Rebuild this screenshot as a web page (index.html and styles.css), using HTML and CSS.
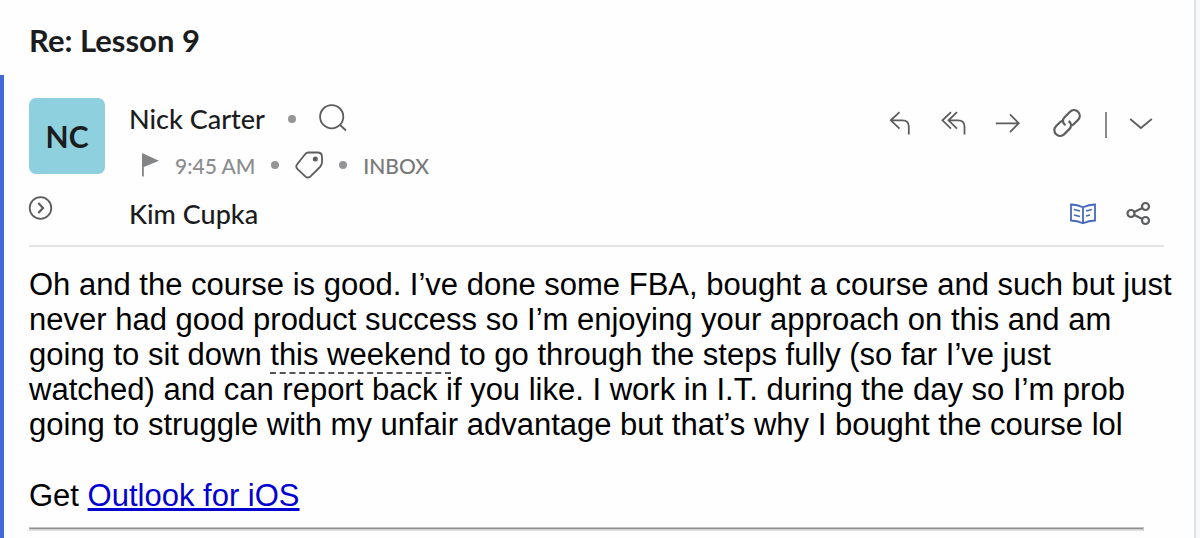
FILE: index.html
```html
<!DOCTYPE html>
<html lang="en">
<head>
<meta charset="utf-8">
<title>Re: Lesson 9</title>
<link rel="stylesheet" href="styles.css">
</head>
<body>
<main class="pane">
  <h1 class="subject">Re: Lesson 9</h1>
  <article class="message">
    <header class="head">
      <div class="avatar">NC</div>
      <div class="row from">
        <span class="person">Nick Carter</span>
        <span class="dot"></span>
        <button class="icon" type="button" aria-label="Search sender"><svg viewBox="0 0 28 28"><circle cx="12.700" cy="11.700" r="11.600"/><path d="M21 20l6 5.500"/></svg></button>
      </div>
      <div class="actions">
        <button class="icon" type="button" aria-label="Reply"><svg viewBox="0 0 28 28"><path d="M13.500 3.200L4.800 11.300L13.500 19.600M5 11.300H16.500Q22.800 11.300 22.800 17.500V25.500"/></svg></button>
        <button class="icon" type="button" aria-label="Reply all"><svg viewBox="0 0 28 28"><path d="M11 3.200L2.500 11.300L11 19.600M17 3.200L8.500 11.300L17 19.600M9 11.300H18Q24.500 11.300 24.500 17.500V25.500"/></svg></button>
        <button class="icon" type="button" aria-label="Forward"><svg viewBox="0 0 28 28"><path d="M1.800 14.300H24.500M16 5.300L24.700 14.300L16 23.200"/></svg></button>
        <button class="icon link" type="button" aria-label="Copy link"><svg viewBox="0 0 28 28"><g class="bold"><path d="M12.500 16.200C9 13.800 9.400 10.400 11.800 8L16.800 3C19.200.6 22.500.4 25 2.800C27.500 5.300 27.300 8.600 24.900 11L20.600 15.200Q19.300 16.400 17.600 16.700M15.600 12C19 14.300 18.700 17.700 16.300 20.100L11.300 25.100C8.900 27.500 5.600 27.700 3.100 25.200C.6 22.700.8 19.400 3.200 17L7 13.300Q8.400 12 10.200 11.600"/></g></svg></button>
        <span class="rule"></span>
        <button class="icon" type="button" aria-label="More actions"><svg viewBox="0 0 28 28"><path d="M3.200 10L13.900 19L24.800 10"/></svg></button>
      </div>
      <div class="row meta">
        <svg class="flag" viewBox="0 0 18 24"><path d="M1 0L18 7.700L2.800 14V23.500H1Z"/></svg>
        <time>9:45 AM</time>
        <span class="dot"></span>
        <button class="icon" type="button" aria-label="Tag"><svg viewBox="0 0 28 28"><path d="M13.500 1.500H22.500Q27 1.500 27 6V11Q27 14 25 16L15.500 25.300Q12.800 27.800 10.200 25.300L2.600 18.200Q0 15.500 2.500 12.800L10 3.300Q11.500 1.500 13.500 1.500Z"/><circle cx="20.300" cy="8" r="1.600" fill="currentColor"/></svg></button>
        <span class="dot"></span>
        <span class="folder">INBOX</span>
      </div>
      <button class="icon expand" type="button" aria-label="Show recipients"><svg viewBox="0 0 24 24"><circle cx="11.500" cy="12" r="10.800"/><path class="bold" d="M9.300 7L14 12L9.300 17"/></svg></button>
      <div class="row to"><span class="person">Kim Cupka</span></div>
      <div class="tools">
        <button class="icon reader" type="button" aria-label="Reading view"><svg viewBox="0 0 28 28"><path d="M14 7.300Q8 4.400 2 4.500V20.500Q8 20.500 14 23.300Q20 20.500 26 20.500V4.500Q20 4.400 14 7.300V23.300M5 9.500L11 11M5 15L11 16.500M17 11L22.800 9.500M17 16L21 15"/></svg></button>
        <button class="icon" type="button" aria-label="Share"><svg viewBox="0 0 28 28"><g class="bold"><circle cx="6" cy="13.500" r="3.500"/><circle cx="20.500" cy="6.500" r="3.500"/><circle cx="20.500" cy="20.500" r="3.500"/><path d="M9.200 12L17.400 8M9.200 15L17.400 19"/></g></svg></button>
      </div>
    </header>
    <div class="body">
      <p>Oh and the course is good. I’ve done some FBA, bought a course and such but just never had good product success so I’m enjoying your approach on this and am going to sit down <span class="date">this weekend</span> to go through the steps fully (so far I’ve just watched) and can report back if you like. I work in I.T. during the day so I’m prob going to struggle with my unfair advantage but that’s why I bought the course lol</p>
      <p>Get <a href="#">Outlook for iOS</a></p>
      <hr>
    </div>
  </article>
</main>
</body>
</html>
```
FILE: styles.css
```css
* { box-sizing: border-box; }

body {
  margin: 0;
  background: #f7f8fa;
  color: #1b1c1d;
  font-family: Lato, sans-serif;
  overflow: hidden;
}

.pane {
  display: flex;
  flex-direction: column;
  min-height: 100vh;
  margin-right: 4px;
  background: #fefefe;
  border-right: 2px solid #e0e2e4;
}

.subject {
  margin: 0;
  padding: 22px 29px 17px;
  font-size: 31px;
  line-height: 36px;
  font-weight: 700;
}

.message {
  flex: 1;
  padding: 23px 30px 0 25px;
  border-left: 4px solid #4169d8;
}

.head {
  display: grid;
  grid-template-columns: 76px 1fr auto;
  grid-template-rows: 42px 50px 48px;
  column-gap: 24px;
  padding-bottom: 7px;
  border-bottom: 2px solid #e2e3e4;
}

.avatar {
  grid-row: 1 / 3;
  display: flex;
  align-items: center;
  justify-content: center;
  width: 76px;
  height: 76px;
  border-radius: 7px;
  background: #8fd0de;
  font-size: 30px;
  font-weight: 700;
}

.row, .actions, .tools { display: flex; align-items: center; }

.person { font-size: 27px; line-height: 36px; font-weight: 500; }

.from { gap: 23px; }

.meta {
  grid-column: 2 / 4;
  gap: 16px;
  padding-left: 12px;
  color: #8b8c8d;
  font-size: 21px;
  font-weight: 500;
}

.folder { color: #77787a; }

.dot {
  width: 8px;
  height: 8px;
  border-radius: 50%;
  background: #949596;
}

.icon {
  display: flex;
  width: 28px;
  height: 28px;
  padding: 0;
  border: 0;
  background: none;
  color: #5c5d5f;
}

.icon svg {
  width: 100%;
  height: 100%;
  fill: none;
  stroke: currentColor;
  stroke-width: 1.8;
  overflow: visible;
}

.icon .bold { stroke-width: 2.2; }

.flag { width: 18px; height: 24px; fill: #838485; }

.actions { gap: 26px; padding: 8px 9px 0 0; }

.link { margin-left: 5px; }

.rule {
  width: 2px;
  height: 26px;
  margin: 4px -6px 0 -2px;
  background: #88898a;
}

.expand {
  width: 24px;
  height: 24px;
  margin-top: 6px;
}

.tools {
  justify-content: flex-end;
  gap: 28px;
  padding-right: 11px;
}

.reader { color: #4468bd; }

.body {
  margin-right: -16px;
  padding-top: 20px;
  color: #000;
  font-family: "Liberation Sans", Arial, sans-serif;
  font-size: 31px;
  line-height: 35px;
}

.body p { margin: 0 0 36px; }

.date {
  text-decoration: underline dashed #555 2px;
  text-underline-offset: 7px;
}

.body a { color: #0000d0; text-decoration-thickness: 3px; }

.body hr {
  height: 4px;
  margin: -22px 36px 0 0;
  border: 1px solid #c4c4c4;
  border-bottom-color: #e2e2e2;
  background: linear-gradient(#8e8e8e 50%, #d0d0d0 50%);
}
```
